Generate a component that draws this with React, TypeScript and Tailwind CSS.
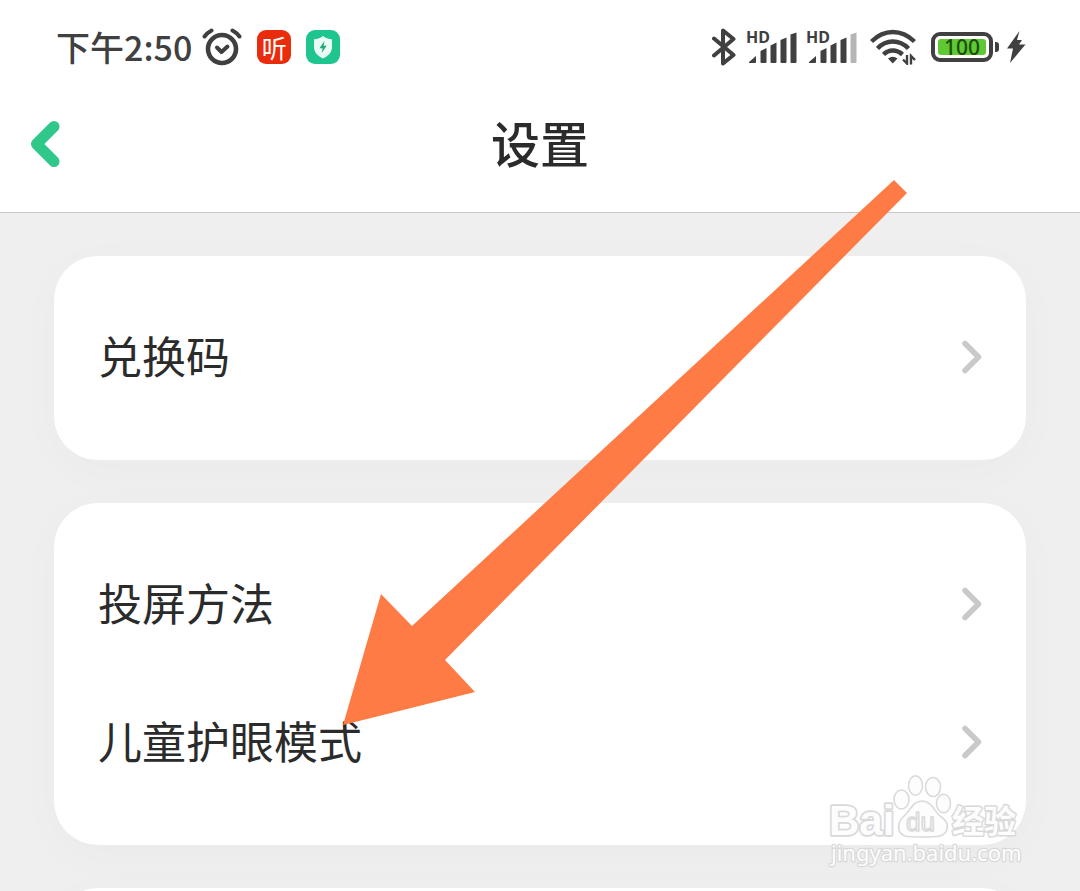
interface SettingRowProps {
  label: string;
}

function SettingRow({ label }: SettingRowProps) {
  return (
    <button type="button" className="w-full h-[138px] px-11 flex items-center justify-between text-left">
      <span className="pb-1 text-[44px] leading-[60px] text-[#2b2b2b]">{label}</span>
      <svg className="w-5 h-[34px]" viewBox="0 0 20 34" fill="none" stroke="#c9c9c9" strokeWidth={5.5} strokeLinecap="round" strokeLinejoin="round">
        <path d="M3 3.5 16.5 17 3 30.5" />
      </svg>
    </button>
  );
}

function SettingCard({ items }: { items: string[] }) {
  return (
    <section className="shrink-0 min-h-[204px] pt-8 pb-[34px] rounded-[44px] bg-white shadow-[0_10px_50px_rgba(0,0,0,0.025)]">
      {items.map((item) => (
        <SettingRow key={item} label={item} />
      ))}
    </section>
  );
}

function AlarmIcon() {
  return (
    <svg className="w-10 h-10" viewBox="0 0 40 40" fill="none" stroke="#404040" strokeLinecap="round" strokeLinejoin="round">
      <circle cx="20" cy="22" r="14" strokeWidth={4.6} />
      <path d="M15 20.500 19.500 25 25.500 19.500" strokeWidth={4} />
      <path d="M2.500 9.500Q5 6 9.500 3.500M37.500 9.500Q35 6 30.500 3.500" strokeWidth={4} />
    </svg>
  );
}

function ShieldIcon() {
  return (
    <svg className="w-[34px] h-[34px]" viewBox="0 0 34 34">
      <rect width="34" height="34" rx="9" fill="#1fc58e" />
      <path d="M17 6C20 8.500 23 9 26 9.300V17C26 22.500 22 26 17 28.500C12 26 8 22.500 8 17V9.300C11 9 14 8.500 17 6Z" fill="#e9fbf4" />
      <path d="M18.500 11 13.500 18.200H16.600L15.600 23 20.700 15.800H17.600Z" fill="#1fa878" />
    </svg>
  );
}

function BluetoothIcon() {
  return (
    <svg className="w-6 h-[38px]" viewBox="0 0 24 38" fill="none" stroke="#404040" strokeWidth={4} strokeLinejoin="round" strokeLinecap="round">
      <path d="M2 10.500 21.500 27 11 35.500V2.500L21.500 11 2 27.500" />
    </svg>
  );
}

function Signal({ full }: { full: boolean }) {
  return (
    <div className="relative w-[50px] h-[34px]">
      <span className="absolute -left-0.5 top-0 text-[16px] leading-[14px] font-bold text-[#404040] font-['Noto_Sans',sans-serif]">HD</span>
      <svg className="w-[50px] h-[34px]" viewBox="0 0 50 34" fill="#404040">
        <path d="M1 32 8 26V32Q8 33 7 33H1.500Q.5 33 1 32Z" />
        <path d="M12.500 21 18.500 18V32Q18.500 33 17.500 33H13.500Q12.500 33 12.500 32Z" />
        <path d="M22.500 15.500 28.500 12.500V32Q28.500 33 27.500 33H23.500Q22.500 33 22.500 32Z" />
        <path d="M32.500 10 38.500 7.500V32Q38.500 33 37.500 33H33.500Q32.500 33 32.500 32Z" />
        <path d="M42.500 4.500 48.500 2.500V32Q48.500 33 47.500 33H43.500Q42.500 33 42.500 32Z" fill={full ? "#404040" : "#b5b5b5"} />
      </svg>
    </div>
  );
}

function WifiIcon() {
  return (
    <svg className="w-[46px] h-9" viewBox="0 0 46 36" fill="none" stroke="#404040" strokeWidth={4.4}>
      <path d="M1.500 12.500Q11 3 22.800 3T44.500 12.500" />
      <path d="M7.500 19.500Q14 12.500 22.800 12.500T38.500 19.500" />
      <path d="M13.500 25.500Q17.500 21.500 22.800 21.500T32.500 25.500" />
      <path d="M18 29.500Q22.800 26 27.500 29.500L22.800 34.500Z" fill="#404040" stroke="none" />
      <path d="M37 26V34.500L33 30.500M41 35.500V27L45 31" strokeWidth={2.4} />
    </svg>
  );
}

function Battery() {
  return (
    <div className="flex items-center gap-0.5">
      <div className="w-[62px] h-[30px] p-[3px] border-4 border-[#404040] rounded-[9px]">
        <div className="h-full flex items-center justify-center rounded-[3px] bg-[#5fc832] text-[21px] leading-none font-medium text-[#1d4d0c] font-['Noto_Sans',sans-serif]">
          100
        </div>
      </div>
      <div className="w-[4px] h-[10px] rounded-r-[3px] bg-[#404040]" />
    </div>
  );
}

function StatusBar() {
  return (
    <div className="h-[94px] pl-14 pr-[54px] flex items-center justify-between">
      <div className="flex items-center">
        <span className="text-[34px] leading-[40px] font-medium text-[#404040]">下午2:50</span>
        <div className="ml-2.5 flex items-center gap-[15px]">
          <AlarmIcon />
          <span className="w-[34px] h-[34px] flex items-center justify-center rounded-[9px] bg-[#e92d0c] text-[25px] leading-none text-white">听</span>
          <ShieldIcon />
        </div>
      </div>
      <div className="flex items-center">
        <BluetoothIcon />
        <div className="ml-3 mr-3 flex gap-2.5">
          <Signal full />
          <Signal full={false} />
        </div>
        <WifiIcon />
        <div className="ml-[15px] flex items-center gap-[7px]">
          <Battery />
          <svg className="w-5 h-8" viewBox="0 0 20 32" fill="#404040">
            <path d="M13.500 0 1 17.500H7L4 32 19.500 13.500H13L16 9H11Z" />
          </svg>
        </div>
      </div>
    </div>
  );
}

function Watermark() {
  return (
    <svg
      className="absolute right-[52px] top-[770px] w-[200px] h-[102px] pointer-events-none"
      viewBox="0 0 200 102"
      fill="#fdfdfd"
      stroke="#d9d9d9"
      strokeWidth={1.5}
      strokeLinejoin="round"
    >
      <text x="1" y="65" fontSize="42" strokeWidth={3.5} paintOrder="stroke" className="font-bold font-['Liberation_Sans',sans-serif]">Bai</text>
      <ellipse cx="73.500" cy="29.500" rx="7.500" ry="9.500" />
      <ellipse cx="87.500" cy="15.500" rx="7" ry="9.800" />
      <ellipse cx="105" cy="17" rx="7.500" ry="9.500" />
      <ellipse cx="115.500" cy="33.500" rx="7" ry="9.300" />
      <path d="M94 31C103 31 106 40 111 45C117 50 121 53 119 59C117 67 110 67 94 67C79 67 73 67 71 60C69 53 73 49 78 44C83 39 85 31 94 31Z" />
      <text x="78" y="61" fontSize="26" className="font-['Liberation_Sans',sans-serif]">du</text>
      <text x="124" y="63" fontSize="32" strokeWidth={3} paintOrder="stroke" className="font-bold font-['Noto_Sans_CJK_SC',sans-serif]">经验</text>
      <text x="3" y="91" fontSize="22" strokeWidth={2.5} paintOrder="stroke" className="font-['Noto_Sans',sans-serif]">jingyan.baidu.com</text>
    </svg>
  );
}

const groups = [["兑换码"], ["投屏方法", "儿童护眼模式"], []];

export default function App() {
  return (
    <div className="relative h-screen overflow-hidden flex flex-col bg-[#efefef] font-['Noto_Sans_CJK_SC',sans-serif]">
      <header className="relative z-10 shrink-0 bg-white border-b border-[#c8c8c8]">
        <StatusBar />
        <div className="h-[118px] px-[30px] pb-[18px] grid grid-cols-[1fr_auto_1fr] items-center">
          <button type="button" aria-label="返回" className="justify-self-start">
            <svg className="w-[30px] h-[46px]" viewBox="0 0 30 46" fill="none" stroke="#2fc78a" strokeWidth={11} strokeLinecap="round" strokeLinejoin="round">
              <path d="M24 5.500 6.500 23 24 40.500" />
            </svg>
          </button>
          <h1 className="pb-1 text-[49px] leading-[60px] font-medium text-[#2b2b2b]">设置</h1>
        </div>
      </header>

      <main className="flex-1 min-h-0 overflow-hidden pt-[43px] px-[5%] flex flex-col gap-[43px]">
        {groups.map((items, i) => (
          <SettingCard key={i} items={items} />
        ))}
      </main>

      <svg className="absolute z-20 left-[343px] top-[180px] w-[564px] h-[545px] pointer-events-none" viewBox="0 0 564 545" fill="#ff7b45">
        <polygon points="551,0 564,13 102,480 132,512 0,545 38,414 69,446" />
      </svg>
      <Watermark />
    </div>
  );
}
